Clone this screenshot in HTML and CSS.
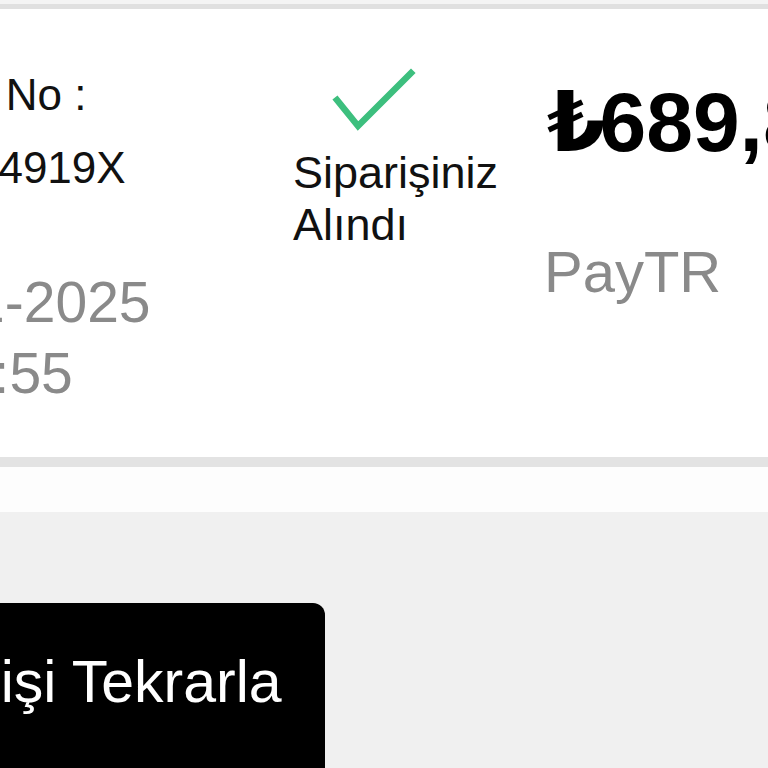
FILE: index.html
```html
<!DOCTYPE html>
<html lang="tr">
<head>
<meta charset="utf-8">
<link rel="stylesheet" href="styles.css">
</head>
<body>
<div class="top-gap"></div>
<section class="card">
  <div class="order-row">
    <div class="col-info">
      <div class="info-inner">
        <div class="label">Sipariş No :</div>
        <div class="label">SPR584919X</div>
        <div class="meta">
          <div>12-11-2025</div>
          <div class="time">14:55</div>
        </div>
      </div>
    </div>
    <div class="col-status">
      <svg class="check" width="130" height="80" viewBox="0 0 130 80">
        <polyline points="44,40 65,66 118,13" fill="none" stroke="#3dbf7e" stroke-width="6.5" stroke-linecap="square" stroke-linejoin="miter"/>
      </svg>
      <div class="status-text">Siparişiniz<br>Alındı</div>
    </div>
    <div class="col-price">
      <div class="price"><span class="currency">₺</span>689,80</div>
      <div class="method">PayTR</div>
    </div>
  </div>
</section>
<div class="spacer"></div>
<footer class="footer">
  <button class="repeat-btn">Siparişi Tekrarla</button>
</footer>
</body>
</html>
```
FILE: styles.css
```css
html, body {
  margin: 0;
  padding: 0;
}
body {
  width: 768px;
  height: 768px;
  overflow: hidden;
  background: #f0f0f0;
  font-family: "Liberation Sans", Arial, "DejaVu Sans", sans-serif;
  color: #111;
}
.top-gap {
  height: 4px;
  background: #f4f4f4;
}
.card {
  background: #fff;
  border-top: 5px solid #e0e0e0;
  border-bottom: 10px solid #e3e3e3;
  height: 448px;
  box-sizing: content-box;
  overflow: hidden;
}
.order-row {
  display: grid;
  grid-template-columns: 434px 251px 1fr;
  margin-left: -141px;
  width: 1100px;
}
.col-info {
  padding-top: 49px;
}
.info-inner {
  width: 288px;
}
.label {
  font-size: 44px;
  line-height: 73px;
  white-space: nowrap;
  color: #111;
}
.meta {
  margin-top: 63px;
  padding-right: 9px;
  font-size: 57px;
  line-height: 71px;
  color: #8a8a8a;
  text-align: center;
  white-space: nowrap;
  font-kerning: none;
}
.time {
  padding-left: 6px;
}
.col-status {
  padding-top: 51px;
}
.check {
  display: block;
}
.status-text {
  margin-top: 7px;
  font-size: 45px;
  line-height: 52px;
  color: #111;
  white-space: nowrap;
}
.col-price {
  padding-top: 71px;
  white-space: nowrap;
}
.price {
  margin-left: 3px;
  font-size: 84px;
  line-height: 84px;
  font-weight: 700;
  color: #000;
}
.currency {
  letter-spacing: -6px;
}
.method {
  margin-top: 79px;
  font-size: 58px;
  line-height: 58px;
  color: #8a8a8a;
}
.spacer {
  height: 45px;
  background: #fdfdfd;
}
.footer {
  background: #f0f0f0;
  padding-top: 91px;
  height: 300px;
}
.repeat-btn {
  display: block;
  margin-left: -183px;
  padding: 45px 43px 80px 46px;
  background: #000;
  color: #fff;
  border: none;
  border-radius: 12px;
  font-family: "Liberation Sans", Arial, sans-serif;
  font-size: 59px;
  line-height: normal;
  white-space: nowrap;
}
```
